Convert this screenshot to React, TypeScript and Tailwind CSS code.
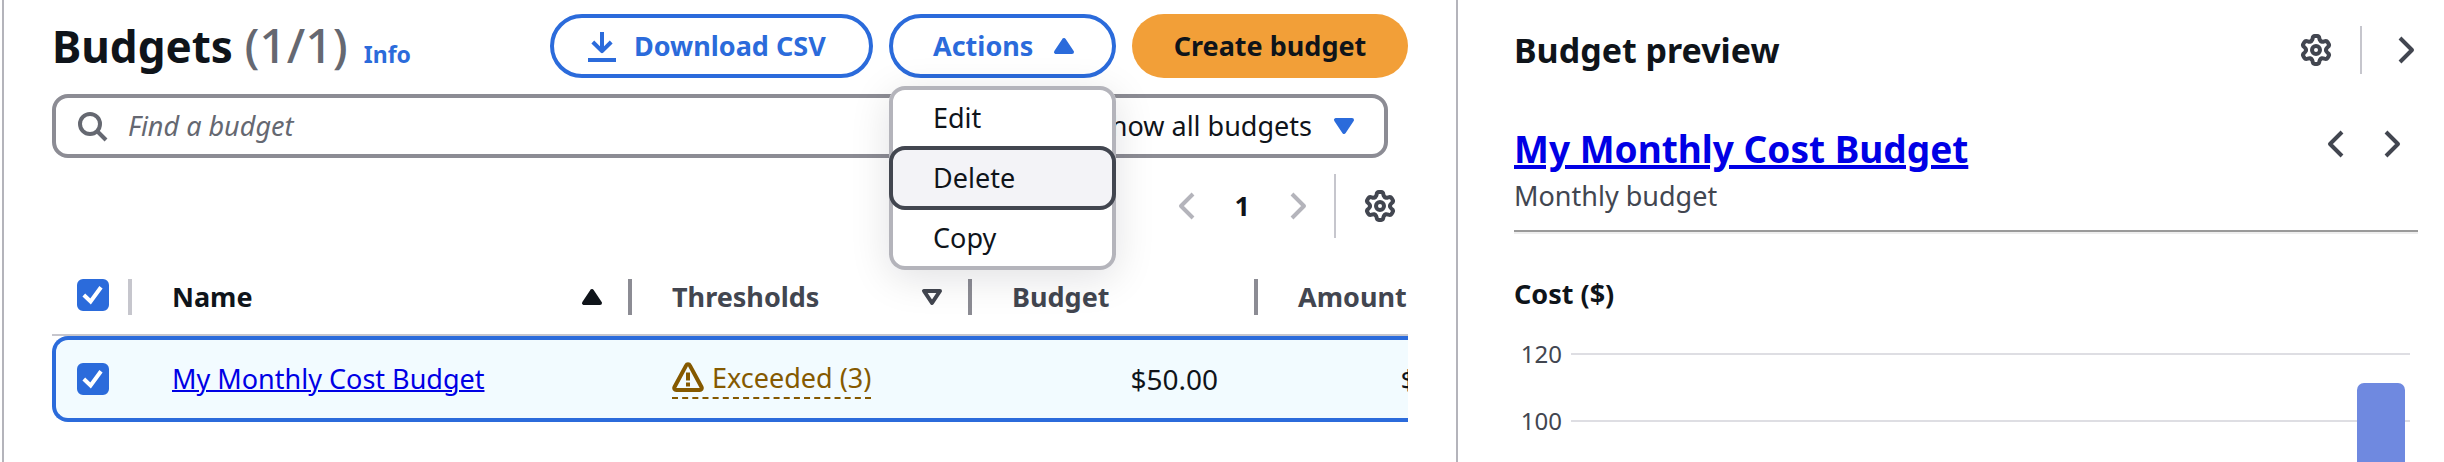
import React from "react";

const stroke = { fill: "none", stroke: "currentColor", strokeWidth: 2 } as const;

function Icon({ children }: { children: React.ReactNode }) {
  return (
    <svg viewBox="0 0 16 16" className="size-8 shrink-0" aria-hidden="true" {...stroke}>
      {children}
    </svg>
  );
}

const Search = () => (
  <Icon>
    <circle cx="7" cy="7" r="5" />
    <path d="m10.5 10.5 4.5 4.5" />
  </Icon>
);

const Download = () => (
  <Icon>
    <path d="M1 15h14M8 1v9M3.4 6 8 10.6 12.6 6" strokeLinejoin="round" />
  </Icon>
);

const CaretUp = () => (
  <Icon>
    <path d="M4 11h8L8 5l-4 6Z" fill="currentColor" strokeLinejoin="round" />
  </Icon>
);

const CaretDown = ({ hollow = false }: { hollow?: boolean }) => (
  <Icon>
    <path d="M4 5h8l-4 6-4-6Z" fill={hollow ? "none" : "currentColor"} strokeLinejoin="round" />
  </Icon>
);

const AngleLeft = () => (
  <Icon>
    <path d="M11 2 5 8l6 6" strokeLinejoin="round" />
  </Icon>
);

const AngleRight = () => (
  <Icon>
    <path d="m5 2 6 6-6 6" strokeLinejoin="round" />
  </Icon>
);

const Gear = () => (
  <Icon>
    {[0, 60, 120, 180, 240, 300].map((angle) => (
      <path
        key={angle}
        transform={`rotate(${angle} 8 8)`}
        strokeLinecap="round"
        d="M5.5 3.67Q6.2 3.27 6.3 2.4 6.400 1 7.400 1h1.200q1 0 1.100 1.400.1.870.8 1.270"
      />
    ))}
    <circle cx="8" cy="8" r="2" />
  </Icon>
);

const Warning = () => (
  <Icon>
    <path d="M7.100 1.700 1.200 12.600A1 1 0 0 0 2.100 14h11.800a1 1 0 0 0 .9-1.400L8.900 1.700a1 1 0 0 0-1.800 0Z" />
    <path d="M8 5.200v4M8 10.300v2" />
  </Icon>
);

function Checkbox({ label }: { label: string }) {
  return (
    <label className="grid size-8 cursor-pointer">
      <input
        type="checkbox"
        defaultChecked
        aria-label={label}
        className="peer col-start-1 row-start-1 size-8 appearance-none rounded-md border-2 border-[#8c8c94] bg-white checked:border-[#2b6bdb] checked:bg-[#2b6bdb]"
      />
      <svg
        viewBox="0 0 16 16"
        className="pointer-events-none col-start-1 row-start-1 size-8 text-white opacity-0 peer-checked:opacity-100"
        aria-hidden="true"
        {...stroke}
      >
        <path d="m3.400 8 3.400 3.200 5.200-7.100" />
      </svg>
    </label>
  );
}

const columns = [
  { name: "Thresholds", width: "w-[340px]", sortable: true },
  { name: "Budget", width: "w-[286px]", sortable: false },
  { name: "Amount", width: "w-[286px]", sortable: false },
];

const menuItems = ["Edit", "Delete", "Copy"];

function ActionsMenu() {
  return (
    <div className="relative">
      <button
        type="button"
        aria-haspopup="menu"
        aria-expanded="true"
        className="flex h-16 w-[227px] items-center justify-between rounded-full border-4 border-[#2b6bdb] pr-8 pl-10 font-bold text-[#2b6bdb]"
      >
        Actions <CaretUp />
      </button>
      <ul
        role="menu"
        className="absolute top-[72px] left-0 z-10 w-full rounded-2xl bg-white inset-ring-4 inset-ring-[#b4b4bb] shadow-[0_8px_40px_rgba(0,7,22,0.12)]"
      >
        {menuItems.map((item) => (
          <li key={item} role="none" className="-mt-1 first:mt-0">
            <button
              type="button"
              role="menuitem"
              className={
                item === "Delete"
                  ? "h-16 w-full rounded-2xl border-4 border-[#424650] bg-[#f3f3f7] pl-10 text-left"
                  : "h-16 w-full rounded-2xl border-4 border-transparent pl-10 text-left"
              }
            >
              {item}
            </button>
          </li>
        ))}
      </ul>
    </div>
  );
}

function BudgetList() {
  return (
    <main className="flex min-w-0 flex-col border-x-2 border-[#b4b4bb] px-12 pt-3.5">
      <header className="flex h-16 items-start justify-between">
        <h1 className="flex items-baseline gap-4 leading-16">
          <span className="text-[44px] font-bold">
            Budgets{" "}
            <span className="text-5xl leading-none font-medium text-[#656871]">(1/1)</span>
          </span>
          <a href="#info" className="text-[23px] leading-none font-bold text-[#2b6bdb]">
            Info
          </a>
        </h1>
        <div className="flex gap-4">
          <button
            type="button"
            className="flex h-16 w-[323px] items-center gap-4 rounded-full border-4 border-[#2b6bdb] pl-8 font-bold text-[#2b6bdb]"
          >
            <Download /> Download CSV
          </button>
          <ActionsMenu />
          <button type="button" className="h-16 w-[276px] rounded-full bg-[#f29f38] font-bold">
            Create budget
          </button>
        </div>
      </header>

      <div className="mt-4 mr-5 flex gap-4">
        <label className="flex h-16 min-w-0 flex-1 items-center gap-5 rounded-2xl border-4 border-[#8c8c94] pl-5 text-[#656871]">
          <Search />
          <input
            type="search"
            aria-label="Find a budget"
            placeholder="Find a budget"
            className="min-w-0 flex-1 outline-none placeholder:text-[#656871] placeholder:italic"
          />
        </label>
        <div className="grid h-16 w-[324px] items-center rounded-2xl border-4 border-[#8c8c94]">
          <select
            aria-label="Budget filter"
            className="col-start-1 row-start-1 h-full w-full appearance-none pr-18 text-right outline-none"
          >
            <option>Show all budgets</option>
          </select>
          <span className="pointer-events-none col-start-1 row-start-1 mr-6 justify-self-end text-[#2b6bdb]">
            <CaretDown />
          </span>
        </div>
      </div>

      <div className="mt-4 mr-3 flex h-16 items-center justify-end">
        <nav aria-label="Pages" className="flex items-center gap-8 text-[#b4b4bb]">
          <button type="button" aria-label="Previous page" disabled>
            <AngleLeft />
          </button>
          <button type="button" aria-current="page" className="font-bold text-[#0f141a]">
            1
          </button>
          <button type="button" aria-label="Next page" disabled>
            <AngleRight />
          </button>
        </nav>
        <span className="mr-7 ml-5 h-16 w-0.5 bg-[#c6c6cd]" />
        <button type="button" aria-label="Preferences" className="text-[#424650]">
          <Gear />
        </button>
      </div>

      <div className="overflow-hidden pt-10">
        <table className="w-[1492px] table-fixed border-separate border-spacing-0 text-left">
          <thead>
            <tr className="text-[#424650] [&>th]:h-[58px] [&>th]:border-b-2 [&>th]:border-[#c6c6cd] [&>th]:p-0 [&>th]:pb-[18px]">
              <th className="w-20">
                <div className="flex h-9 justify-between border-r-4 border-[#c6c6cd] pl-[25px]">
                  <Checkbox label="Select all budgets" />
                </div>
              </th>
              <th className="w-[500px] text-[#0f141a]" aria-sort="ascending">
                <div className="flex h-9 items-center justify-between border-r-4 border-[#8c8c94] pr-5 pl-10">
                  Name <CaretUp />
                </div>
              </th>
              {columns.map((column) => (
                <th key={column.name} className={column.width}>
                  <div className="flex h-9 items-center justify-between border-r-4 border-[#8c8c94] pr-5 pl-10">
                    {column.name} {column.sortable && <CaretDown hollow />}
                  </div>
                </th>
              ))}
            </tr>
          </thead>
          <tbody>
            <tr className="[&>td]:h-[86px] [&>td]:border-y-4 [&>td]:border-[#2b6bdb] [&>td]:bg-[#f2fbff] [&>td]:p-0">
              <td className="rounded-l-2xl border-l-4">
                <div className="pl-[21px]">
                  <Checkbox label="Select My Monthly Cost Budget" />
                </div>
              </td>
              <td>
                <a href="#budget" className="ml-10 text-[#0000e5] underline decoration-2">
                  My Monthly Cost Budget
                </a>
              </td>
              <td>
                <button
                  type="button"
                  className="ml-10 flex h-10 items-center gap-2 border-b-2 border-dashed border-[#855900] text-[#855900]"
                >
                  <Warning /> Exceeded (3)
                </button>
              </td>
              <td className="text-right text-[28px]">
                <span className="mr-10">$50.00</span>
              </td>
              <td className="text-right text-[28px]">
                <span className="mr-10">$111.00</span>
              </td>
            </tr>
          </tbody>
        </table>
      </div>
    </main>
  );
}

const ticks = [
  { value: 120, y: 24 },
  { value: 100, y: 91 },
];

function CostChart() {
  return (
    <svg role="img" aria-label="Cost chart" className="min-h-0 w-full flex-1">
      {ticks.map(({ value, y }) => (
        <g key={value}>
          <text x="48" y={y + 9} textAnchor="end" fontSize="24" fill="#424650">
            {value}
          </text>
          <line x1="57" x2="100%" y1={y} y2={y} stroke="#dedee3" strokeWidth="2" />
        </g>
      ))}
      <svg x="100%" overflow="visible">
        <rect x="-53" y="53" width="48" height="400" rx="7" fill="#6f89e0" />
      </svg>
    </svg>
  );
}

function BudgetPreview() {
  return (
    <aside className="flex min-w-0 flex-col pr-[26px] pl-14 text-[#424650]">
      <header className="flex h-[100px] items-center justify-between">
        <h2 className="text-[34px] font-bold text-[#0f141a]">Budget preview</h2>
        <div className="-mr-1 flex items-center">
          <button type="button" aria-label="Preview settings">
            <Gear />
          </button>
          <span className="mr-7 ml-7 h-12 w-0.5 bg-[#c6c6cd]" />
          <button type="button" aria-label="Close preview">
            <AngleRight />
          </button>
        </div>
      </header>
      <div className="flex justify-between pt-6">
        <div>
          <h3 className="text-[37px] leading-[50px] font-bold">
            <a href="#budget" className="text-[#0000e5] underline decoration-4">
              My Monthly Cost Budget
            </a>
          </h3>
          <p className="mt-0.5 leading-10">Monthly budget</p>
        </div>
        <div className="mt-0.5 mr-2.5 flex h-9 items-center gap-6">
          <button type="button" aria-label="Previous budget">
            <AngleLeft />
          </button>
          <button type="button" aria-label="Next budget">
            <AngleRight />
          </button>
        </div>
      </div>
      <hr className="mt-3.5 border-t-2 border-b-2 border-t-[#9a9a9a] border-b-[#eeeeee]" />
      <h4 className="mt-10 leading-10 font-bold text-[#0f141a]">Cost ($)</h4>
      <div className="mt-4 flex min-h-0 flex-1 pr-2">
        <CostChart />
      </div>
    </aside>
  );
}

export default function App() {
  return (
    <div className="grid h-screen grid-cols-[1456fr_986fr] overflow-hidden bg-white pl-0.5 font-['Noto_Sans','Open_Sans',sans-serif] text-[27px] leading-9 text-[#0f141a]">
      <BudgetList />
      <BudgetPreview />
    </div>
  );
}
